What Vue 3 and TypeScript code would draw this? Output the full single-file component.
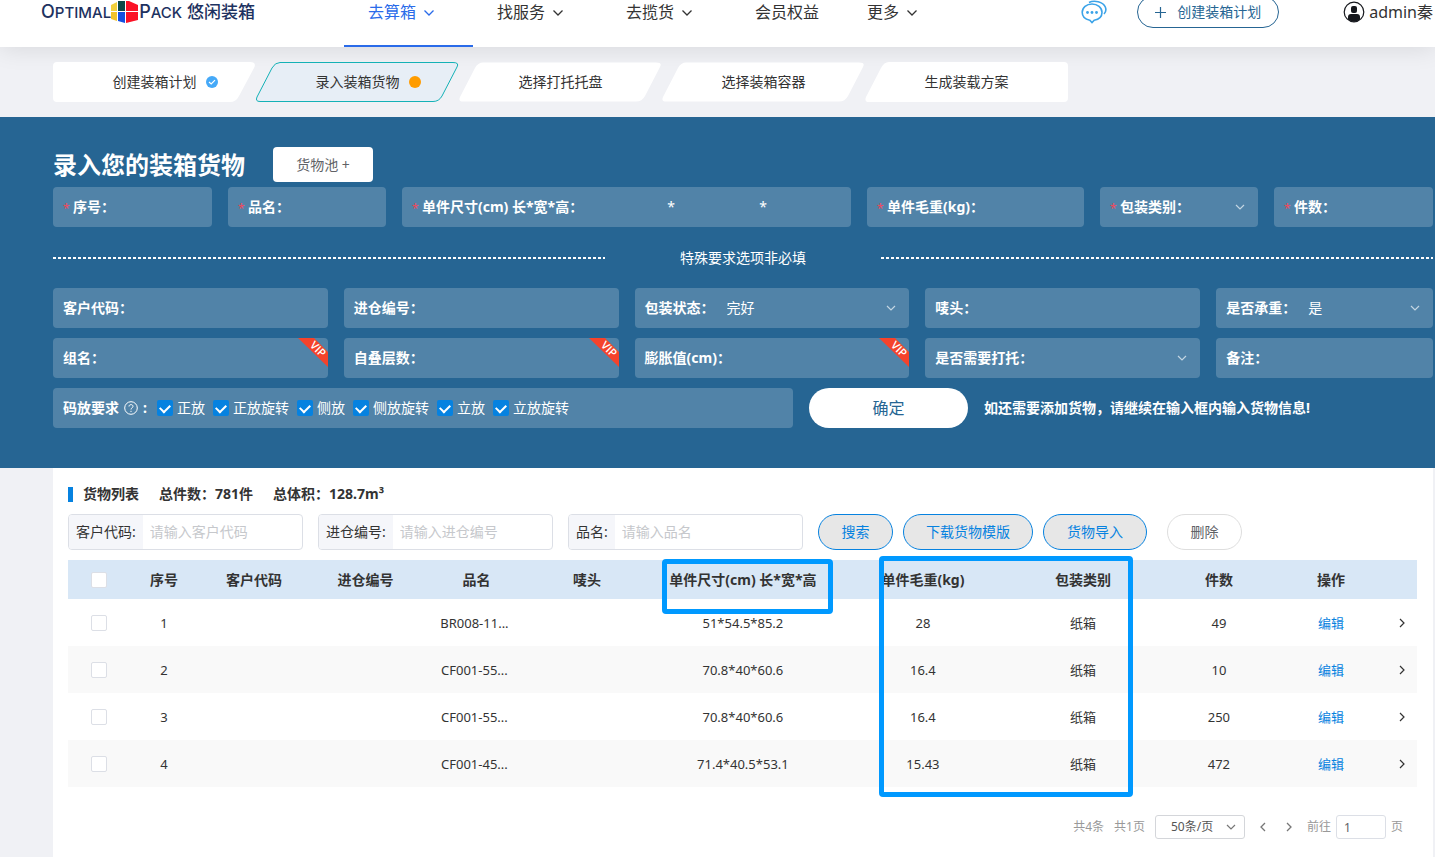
<script setup lang="ts">
import { ref } from 'vue'

interface NavItem { label: string; menu: boolean; active?: boolean }
interface Step { label: string; state: 'done' | 'current' | 'todo' }
interface Field { id: string; label: string; kind: 'text' | 'select' | 'size'; required?: boolean; value?: string; vip?: boolean }
interface Cargo { no: number; name: string; size: string; weight: string; pack: string; count: number }

const nav: NavItem[] = [
  { label: '去算箱', menu: true, active: true },
  { label: '找服务', menu: true },
  { label: '去揽货', menu: true },
  { label: '会员权益', menu: false },
  { label: '更多', menu: true },
]

const steps: Step[] = [
  { label: '创建装箱计划', state: 'done' },
  { label: '录入装箱货物', state: 'current' },
  { label: '选择打托托盘', state: 'todo' },
  { label: '选择装箱容器', state: 'todo' },
  { label: '生成装载方案', state: 'todo' },
]

const firstShape = 'M4 0H197Q204 0 201 6L186 34Q183 40 177 40H4Q0 40 0 36V4Q0 0 4 0Z'
const midShape = 'M24 .5H197Q203.500 .5 201 5L186 34Q183 39.5 177 39.5H4Q-1 39.5 1 35L16 6Q19 .5 24 .5Z'
const lastShape = 'M24 0H199Q203 0 203 4V36Q203 40 199 40H4Q-1 40 1 35L16 6Q19 0 24 0Z'
const shapeOf = (i: number) => (i === 0 ? firstShape : i === steps.length - 1 ? lastShape : midShape)

const required: Field[] = [
  { id: 'no', label: '序号：', kind: 'text', required: true },
  { id: 'name', label: '品名：', kind: 'text', required: true },
  { id: 'size', label: '单件尺寸(cm) 长*宽*高：', kind: 'size', required: true },
  { id: 'weight', label: '单件毛重(kg)：', kind: 'text', required: true },
  { id: 'pack', label: '包装类别：', kind: 'select', required: true, value: '' },
  { id: 'count', label: '件数：', kind: 'text', required: true },
]

const optional: Field[] = [
  { id: 'customer', label: '客户代码：', kind: 'text' },
  { id: 'entry', label: '进仓编号：', kind: 'text' },
  { id: 'state', label: '包装状态：', kind: 'select', value: '完好' },
  { id: 'mark', label: '唛头：', kind: 'text' },
  { id: 'bearing', label: '是否承重：', kind: 'select', value: '是' },
  { id: 'group', label: '组名：', kind: 'text', vip: true },
  { id: 'stack', label: '自叠层数：', kind: 'text', vip: true },
  { id: 'expand', label: '膨胀值(cm)：', kind: 'text', vip: true },
  { id: 'pallet', label: '是否需要打托：', kind: 'select', value: '' },
  { id: 'remark', label: '备注：', kind: 'text' },
]

const placements = ref([
  { label: '正放', on: true },
  { label: '正放旋转', on: true },
  { label: '侧放', on: true },
  { label: '侧放旋转', on: true },
  { label: '立放', on: true },
  { label: '立放旋转', on: true },
])

const filters = [
  { id: 'f-customer', label: '客户代码:', hint: '请输入客户代码' },
  { id: 'f-entry', label: '进仓编号:', hint: '请输入进仓编号' },
  { id: 'f-name', label: '品名:', hint: '请输入品名' },
]

const columns = [
  { title: '', weight: 62 },
  { title: '序号', weight: 68 },
  { title: '客户代码', weight: 112 },
  { title: '进仓编号', weight: 111 },
  { title: '品名', weight: 111 },
  { title: '唛头', weight: 110 },
  { title: '单件尺寸(cm) 长*宽*高', weight: 202 },
  { title: '单件毛重(kg)', weight: 158 },
  { title: '包装类别', weight: 162 },
  { title: '件数', weight: 110 },
  { title: '操作', weight: 114 },
  { title: '', weight: 29 },
]
const totalWeight = columns.reduce((sum, c) => sum + c.weight, 0)

const rows: Cargo[] = [
  { no: 1, name: 'BR008-11...', size: '51*54.5*85.2', weight: '28', pack: '纸箱', count: 49 },
  { no: 2, name: 'CF001-55...', size: '70.8*40*60.6', weight: '16.4', pack: '纸箱', count: 10 },
  { no: 3, name: 'CF001-55...', size: '70.8*40*60.6', weight: '16.4', pack: '纸箱', count: 250 },
  { no: 4, name: 'CF001-45...', size: '71.4*40.5*53.1', weight: '15.43', pack: '纸箱', count: 472 },
]
const pageNo = ref('1')
</script>

<template>
  <div class="page">
    <header class="top">
      <a class="logo" href="#" aria-label="Optimal Pack 悠闲装箱">
        <span class="word"><span class="cap">O</span>PTIMAL</span>
        <svg class="cube" width="28" height="23" viewBox="0 0 28 23">
          <path d="M0 4 6 1V10H0Z" fill="#f2d03b" />
          <path d="M0 11H6V20L0 18Z" fill="#f2c32b" />
          <path d="M7 0H14V10H7Z" fill="#0b4a48" />
          <path d="M7 11H14V22L7 20Z" fill="#1450e0" />
          <path d="M15 0H18L27 4V10H15Z" fill="#fb1226" />
          <path d="M15 11H27V19L15 22Z" fill="#fb1226" />
        </svg>
        <span class="word"><span class="cap">P</span>ACK</span>
        <span class="brand">悠闲装箱</span>
      </a>
      <nav class="nav">
        <a v-for="item in nav" :key="item.label" href="#" class="nav-item" :class="{ active: item.active }">
          <span>{{ item.label }}</span>
          <svg v-if="item.menu" class="nav-arrow" width="10" height="6" viewBox="0 0 10 6"><path d="M.5.5 5 5 9.500.5" fill="none" stroke="currentColor" stroke-width="1.300" /></svg>
        </a>
      </nav>
      <div class="tools">
        <a href="#" class="chat" aria-label="在线客服">
          <svg width="26" height="24" viewBox="0 0 26 24" fill="none" stroke="#3ba3e8" stroke-width="1.600">
            <path d="M11 4C5.500 4 1.200 7.600 1.200 12.300 1.200 16.500 4.500 19.400 8.800 20.200L11 22.500 13.200 20.200C17.800 19.500 21 16.500 21 12.300 21 7.600 16.500 4 11 4Z" />
            <path d="M8 2.500C13 0 22 1.500 24.300 7 25.500 10 24.500 12.500 23 14" />
            <g fill="#3ba3e8" stroke="none"><circle cx="6.500" cy="12.500" r="1.400" /><circle cx="11" cy="12.500" r="1.400" /><circle cx="15.500" cy="12.500" r="1.400" /></g>
          </svg>
        </a>
        <button type="button" class="create">
          <svg width="11" height="11" viewBox="0 0 11 11"><path d="M5.500 0V11M0 5.500H11" stroke="currentColor" stroke-width="1.200" /></svg>
          创建装箱计划
        </button>
        <a href="#" class="user">
          <svg width="22" height="22" viewBox="0 0 22 22">
            <circle cx="11" cy="11" r="9.800" fill="#fff" stroke="#15171c" stroke-width="1.200" />
            <rect x="8" y="5" width="6" height="7" rx="2" fill="#15171c" />
            <path d="M5 18.500V16Q5 13 8 13H14Q17 13 17 16V18.500Q11 23 5 18.500Z" fill="#15171c" />
          </svg>
          <span>admin秦</span>
        </a>
      </div>
    </header>

    <ol class="steps">
      <li v-for="(step, i) in steps" :key="step.label" class="step" :class="step.state">
        <svg class="step-shape" width="203" height="40" viewBox="0 0 203 40"><path :d="shapeOf(i)" /></svg>
        <span class="step-label">{{ step.label }}</span>
        <svg v-if="step.state === 'done'" class="step-mark" width="12" height="12" viewBox="0 0 12 12">
          <circle cx="6" cy="6" r="6" fill="#45a9f8" />
          <path d="M3 6 5.200 8 9 4.200" fill="none" stroke="#fff" stroke-width="1.200" />
        </svg>
        <span v-else-if="step.state === 'current'" class="step-mark dot"></span>
      </li>
    </ol>

    <section class="entry">
      <div class="entry-head">
        <h1>录入您的装箱货物</h1>
        <button type="button" class="pool">货物池 +</button>
      </div>

      <div class="grid-required">
        <div v-for="f in required" :key="f.id" class="field" :class="f.kind">
          <label :for="f.id"><span class="star">*</span><span>{{ f.label }}</span></label>
          <template v-if="f.kind === 'size'">
            <input :id="f.id" type="text" /><span class="times">*</span>
            <input type="text" aria-label="宽" /><span class="times">*</span>
            <input type="text" aria-label="高" />
          </template>
          <template v-else-if="f.kind === 'select'">
            <select :id="f.id"><option>{{ f.value }}</option></select>
            <svg class="caret" width="10" height="6" viewBox="0 0 10 6"><path d="M1 1 5 5 9 1" /></svg>
          </template>
          <input v-else :id="f.id" type="text" />
        </div>
      </div>

      <div class="divider"><span class="dash"></span><span class="divider-text">特殊要求选项非必填</span><span class="dash"></span></div>

      <div class="grid-optional">
        <div v-for="f in optional" :key="f.id" class="field" :class="f.kind">
          <label :for="f.id">{{ f.label }}</label>
          <template v-if="f.kind === 'select'">
            <select :id="f.id"><option>{{ f.value }}</option></select>
            <svg class="caret" width="10" height="6" viewBox="0 0 10 6"><path d="M1 1 5 5 9 1" /></svg>
          </template>
          <input v-else :id="f.id" type="text" />
          <svg v-if="f.vip" class="vip" width="30" height="30" viewBox="0 0 30 30">
            <path d="M0 0H16L30 14V29Z" fill="#f5432b" />
            <text x="20" y="15" text-anchor="middle" transform="rotate(45 20 11)">VIP</text>
          </svg>
        </div>
      </div>

      <div class="place-row">
        <div class="field placement">
          <strong>码放要求</strong>
          <svg class="help" width="14" height="14" viewBox="0 0 14 14" fill="none" stroke="#fff">
            <circle cx="7" cy="7" r="6.300" />
            <path d="M5 5.500C5 3 9 3 9 5.400 9 6.800 7 6.800 7 8.500M7 9.800V11" />
          </svg>
          <strong class="colon">:</strong>
          <label v-for="p in placements" :key="p.label" class="check"><input v-model="p.on" type="checkbox" />{{ p.label }}</label>
        </div>
        <button type="button" class="confirm">确定</button>
        <p class="note">如还需要添加货物，请继续在输入框内输入货物信息!</p>
      </div>
    </section>

    <main class="list">
      <div class="list-head">
        <h2>货物列表</h2>
        <span>总件数：781件</span>
        <span>总体积：128.7m³</span>
      </div>

      <form class="filters" @submit.prevent>
        <div v-for="f in filters" :key="f.id" class="filter">
          <label :for="f.id">{{ f.label }}</label>
          <input :id="f.id" type="text" :placeholder="f.hint" />
        </div>
        <div class="actions">
          <button type="submit" class="pill">搜索</button>
          <button type="button" class="pill">下载货物模版</button>
          <button type="button" class="pill wide">货物导入</button>
          <button type="button" class="pill plain">删除</button>
        </div>
      </form>

      <div class="table-wrap">
        <table>
          <colgroup>
            <col v-for="(c, i) in columns" :key="i" :style="{ width: (c.weight / totalWeight) * 100 + '%' }" />
          </colgroup>
          <thead>
            <tr>
              <th v-for="(c, i) in columns" :key="i" scope="col">
                <input v-if="i === 0" type="checkbox" class="box" aria-label="全选" />
                <template v-else>{{ c.title }}</template>
              </th>
            </tr>
          </thead>
          <tbody>
            <tr v-for="r in rows" :key="r.no">
              <td><input type="checkbox" class="box" :aria-label="'选择 ' + r.no" /></td>
              <td>{{ r.no }}</td>
              <td></td>
              <td></td>
              <td class="name">{{ r.name }}</td>
              <td></td>
              <td>{{ r.size }}</td>
              <td>{{ r.weight }}</td>
              <td>{{ r.pack }}</td>
              <td>{{ r.count }}</td>
              <td><a href="#">编辑</a></td>
              <td class="more">
                <button type="button" aria-label="展开"><svg width="6" height="10" viewBox="0 0 6 10"><path d="M1 1 5 5 1 9" fill="none" stroke="#333" stroke-width="1.200" /></svg></button>
              </td>
            </tr>
          </tbody>
        </table>
        <div class="frame frame-size"></div>
        <div class="frame frame-weight"></div>
      </div>

      <div class="pager">
        <span>共4条</span>
        <span>共1页</span>
        <span class="page-size">
          <select aria-label="每页条数"><option>50条/页</option></select>
          <svg width="10" height="6" viewBox="0 0 10 6"><path d="M1 1 5 5 9 1" fill="none" stroke="#777" stroke-width="1.200" /></svg>
        </span>
        <button type="button" aria-label="上一页"><svg width="6" height="10" viewBox="0 0 6 10"><path d="M5 1 1 5 5 9" fill="none" stroke="#777" stroke-width="1.300" /></svg></button>
        <button type="button" aria-label="下一页"><svg width="6" height="10" viewBox="0 0 6 10"><path d="M1 1 5 5 1 9" fill="none" stroke="#777" stroke-width="1.300" /></svg></button>
        <label class="jump">前往<input v-model="pageNo" type="text" />页</label>
      </div>
    </main>
  </div>
</template>

<style>
body {
  margin: 0;
}
</style>

<style scoped>
.page,
.page * {
  box-sizing: border-box;
}
.page {
  display: flex;
  flex-direction: column;
  min-height: 100vh;
  overflow: hidden;
  background: #f0f1f5;
  color: #333;
  font: 14px/20px "Noto Sans", "Noto Sans CJK SC", sans-serif;
}
button,
input,
select {
  margin: 0;
  padding: 0;
  border: 0;
  background: none;
  color: inherit;
  font: inherit;
  outline: 0;
}
button {
  cursor: pointer;
}
select {
  appearance: none;
}
a {
  color: inherit;
  text-decoration: none;
}

/* top bar */
.top {
  position: relative;
  display: flex;
  height: 47px;
  background: #fff;
  box-shadow: 0 2px 24px rgba(0, 0, 0, 0.1);
}
.logo {
  display: flex;
  align-items: center;
  flex: 0 0 344px;
  height: 24px;
  padding-left: 41px;
  color: #1d3260;
}
.word {
  font: 500 15px/24px Inter, sans-serif;
}
.cap {
  font-size: 18px;
}
.brand {
  margin-left: 5px;
  font-size: 17px;
  font-weight: 500;
}
.nav {
  display: flex;
  white-space: nowrap;
  font-size: 16px;
}
.nav-item {
  display: flex;
  height: 47px;
  padding: 0 24px;
  border-bottom: 2px solid transparent;
  line-height: 24px;
}
.nav-item.active {
  border-color: #2a6be9;
  color: #2a6be9;
}
.nav-arrow {
  margin: 10px 15px 0 8px;
}
.tools {
  display: flex;
  align-items: center;
  height: 24px;
  margin-left: auto;
  padding-right: 2px;
  white-space: nowrap;
}
.chat {
  display: flex;
  margin-right: 30px;
}
.create {
  display: flex;
  align-items: center;
  justify-content: center;
  gap: 11px;
  width: 142px;
  height: 32px;
  border: 1px solid #266593;
  border-radius: 16px;
  color: #266593;
}
.user {
  display: flex;
  align-items: center;
  gap: 4px;
  margin-left: 64px;
  font-size: 16px;
}

/* steps */
.steps {
  display: flex;
  margin: 0;
  padding: 15px 2px 15px 53px;
  list-style: none;
}
.step {
  position: relative;
  display: grid;
  grid-template-columns: 1fr auto 1fr;
  align-items: center;
  width: 203px;
  height: 40px;
}
.step-shape {
  position: absolute;
  top: 0;
  left: 0;
  fill: #fff;
}
.step.current .step-shape {
  fill: #e7eef6;
  stroke: #14b1b6;
}
.step-label {
  position: relative;
  grid-column: 2;
  white-space: nowrap;
}
.step-mark {
  position: relative;
  grid-column: 3;
  margin-left: 9px;
}
.dot {
  width: 12px;
  height: 12px;
  border-radius: 50%;
  background: #ff9c00;
}

/* entry form */
.entry {
  position: relative;
  padding: 30px 2px 40px 53px;
  background: #266593;
  color: #fff;
}
.entry-head {
  display: flex;
  align-items: center;
  gap: 28px;
  height: 35px;
  margin-bottom: 5px;
}
h1 {
  margin: 0;
  font-size: 24px;
  line-height: 35px;
}
.pool {
  width: 100px;
  height: 35px;
  border-radius: 4px;
  background: #fff;
  color: #606266;
}
.grid-required {
  display: grid;
  grid-template-columns: 159fr 158fr 449fr 217fr 158fr 159fr;
  gap: 16px;
}
.grid-optional {
  display: grid;
  grid-template-columns: 275fr 275fr 275fr 275fr 217fr;
  gap: 10px 16px;
}
.field {
  position: relative;
  display: flex;
  align-items: center;
  min-width: 0;
  height: 40px;
  padding: 0 10px;
  overflow: hidden;
  border-radius: 4px;
  background: rgba(255, 255, 255, 0.2);
  white-space: nowrap;
}
.field.size {
  padding-right: 0;
}
.field label {
  display: flex;
  align-items: center;
  font-weight: 700;
}
.field input[type='text'],
.field select {
  flex: 1;
  width: 0;
  min-width: 0;
  height: 38px;
}
.field select {
  padding-left: 12px;
}
.star {
  width: 10px;
  padding-top: 4px;
  color: #f4475a;
  font-size: 12px;
  font-weight: 400;
}
.caret {
  margin-right: 3px;
  fill: none;
  stroke: #c3d5e2;
  stroke-width: 1.2;
}
.vip {
  position: absolute;
  top: 0;
  right: 0;
}
.vip text {
  fill: #fff;
  font: 600 11px/12px "Open Sans", sans-serif;
}
.divider {
  display: flex;
  align-items: center;
  height: 61px;
}
.dash {
  flex: 2;
  height: 2px;
  background: repeating-linear-gradient(90deg, #fff 0 3px, transparent 3px 5px);
}
.divider-text {
  flex: 1;
  text-align: center;
}
.place-row {
  display: grid;
  grid-template-columns: 740fr 159fr 449fr;
  gap: 16px;
  align-items: center;
  margin-top: 10px;
}
.help {
  margin: 0 5px;
}
.colon {
  width: 14px;
}
.placement .check {
  gap: 4px;
  margin-right: 8px;
  font-weight: 400;
}
.check input {
  display: grid;
  place-items: center;
  width: 16px;
  height: 16px;
  appearance: none;
  border-radius: 2px;
  background: #5c8db0;
}
.check input:checked {
  background: #0682e0;
}
.check input:checked::after {
  content: '';
  width: 8px;
  height: 5px;
  margin-bottom: 2px;
  border: solid #fff;
  border-width: 0 0 2px 2px;
  transform: rotate(-45deg);
}
.confirm {
  height: 40px;
  border-radius: 20px;
  background: #fff;
  color: #266593;
  font-size: 16px;
}
.note {
  margin: 0;
  font-weight: 700;
  white-space: nowrap;
}

/* cargo list */
.list {
  flex: 1;
  margin: 0 2px 0 53px;
  padding: 16px 16px 17px 15px;
  background: #fff;
}
.list-head {
  display: flex;
  align-items: center;
  gap: 20px;
  margin-bottom: 10px;
  font-weight: 700;
}
.list-head h2 {
  display: flex;
  align-items: center;
  gap: 10px;
  margin: 0;
  font-size: 14px;
}
.list-head h2::before {
  content: '';
  width: 5px;
  height: 15px;
  background: #0682e0;
}
.filters {
  display: flex;
  gap: 15px;
  margin-bottom: 10px;
}
.filter {
  display: flex;
  width: 235px;
  height: 36px;
  overflow: hidden;
  border: 1px solid #dcdfe6;
  border-radius: 4px;
}
.filter label {
  padding: 0 7px;
  background: #f5f6fa;
  line-height: 34px;
  white-space: nowrap;
}
.filter input {
  flex: 1;
  min-width: 0;
  padding: 0 7px;
}
.filter input::placeholder {
  color: #c6c8cc;
}
.actions {
  display: flex;
  gap: 10px;
}
.pill {
  min-width: 75px;
  height: 36px;
  padding: 0 22px;
  border: 1px solid #0682e0;
  border-radius: 18px;
  background: #e7e7e7;
  color: #0682e0;
  white-space: nowrap;
}
.pill.wide {
  padding: 0 23px;
}
.pill.plain {
  margin-left: 10px;
  border-color: #dedede;
  background: #fff;
  color: #606266;
}
.table-wrap {
  position: relative;
}
table {
  width: 100%;
  border-collapse: collapse;
  table-layout: fixed;
  text-align: center;
}
th {
  height: 39px;
  padding: 0;
  background: #d8e7f6;
  white-space: nowrap;
}
td {
  height: 47px;
  padding: 0;
  font-size: 13px;
}
td.name {
  padding-right: 4px;
}
tbody tr:nth-child(even) {
  background: #f9f9f9;
}
td a {
  color: #0682e0;
}
.box {
  display: block;
  width: 16px;
  height: 16px;
  margin: 0 auto;
  appearance: none;
  border: 1px solid #dcdfe6;
  border-radius: 2px;
  background: #fff;
}
.more button {
  display: block;
  margin: 0 auto;
}
.more svg {
  display: block;
}
.frame {
  position: absolute;
  border: 5px solid #09f;
  border-radius: 4px;
  pointer-events: none;
}
.frame-size {
  top: -1px;
  left: calc(100% * 594 / 1349);
  width: 171px;
  height: 55px;
}
.frame-weight {
  top: -4px;
  left: calc(100% * 811 / 1349);
  width: 254px;
  height: 241px;
}
.pager {
  display: flex;
  align-items: center;
  justify-content: flex-end;
  gap: 10px;
  margin-top: 28px;
  padding-right: 14px;
  color: #999;
  font-size: 12px;
}
.page-size {
  display: flex;
  align-items: center;
  width: 90px;
  height: 24px;
  padding: 0 8px 0 15px;
  border: 1px solid #d4d6da;
  border-radius: 3px;
  color: #555;
}
.page-size select {
  flex: 1;
  min-width: 0;
}
.pager button {
  display: flex;
  justify-content: center;
  width: 16px;
}
.jump {
  display: flex;
  align-items: center;
  gap: 5px;
}
.jump input {
  width: 50px;
  height: 24px;
  padding: 0 7px;
  border: 1px solid #dcdfe6;
  border-radius: 3px;
  color: #606266;
}
</style>
